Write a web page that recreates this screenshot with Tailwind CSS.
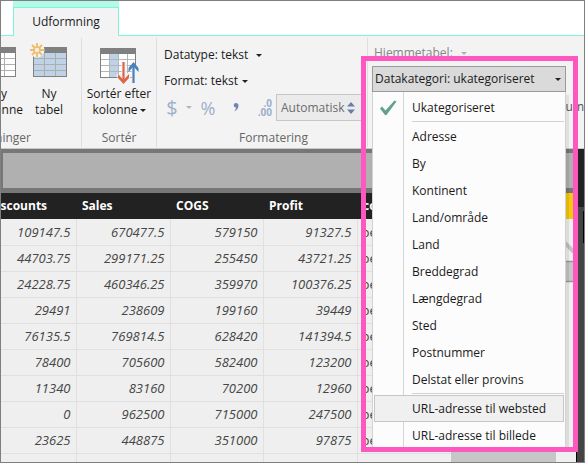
<!DOCTYPE html>
<html lang="da">
<head>
<meta charset="utf-8">
<title>Udformning</title>
<script src="https://cdn.jsdelivr.net/npm/@tailwindcss/browser@4"></script>
</head>
<body class="font-['Open_Sans','Noto_Sans',sans-serif] text-[12px] leading-[18px] text-[#1a1a1a]">
<div class="relative flex h-screen flex-col overflow-hidden border border-[#7f7f7f] bg-white">

  <!-- Tabs -->
  <nav class="flex h-[35px] shrink-0 items-end">
    <div class="w-3 shrink-0 border-b border-[#7df5d8]"></div>
    <div class="flex h-full w-[106px] shrink-0 flex-col">
      <div class="h-1.5 bg-[#b3fbe8]"></div>
      <button class="flex-1 border-x border-t border-[#7df5d8] bg-[#f3f3f3]">Udformning</button>
    </div>
    <div class="flex-1 border-b border-[#7df5d8]"></div>
  </nav>

  <!-- Ribbon -->
  <section class="flex h-[113px] shrink-0 border-b border-[#c8c8c8] bg-[#f3f3f3] pt-0.5 pb-px whitespace-nowrap">
    <div class="flex w-[81px] shrink-0 flex-col border-r border-[#dedede]">
      <div class="flex flex-1">
        <button class="flex w-[22px] flex-col items-end overflow-hidden pt-1">
          <svg class="h-11 w-[22px] shrink-0" viewBox="0 0 22 44" aria-hidden="true">
            <rect x="-18.500" y="5.500" width="33" height="29" fill="#fff" stroke="#808080"/>
            <rect x="-18" y="5" width="33" height="6" fill="#808080"/>
            <path d="M3.500 11V34M0 16.500H14M0 22.500H14M0 28.500H14" stroke="#b0b0b0" fill="none"/>
          </svg>
          <span class="flex flex-col items-end leading-4"><span class="pr-4">Ny</span><span>kolonne</span></span>
        </button>
        <button class="flex w-[52px] flex-col items-center pt-1">
          <svg class="h-11 w-[38px] shrink-0" viewBox="0 0 38 44" aria-hidden="true">
            <rect x="3.500" y="5.500" width="33" height="29" fill="#bfd3e8" stroke="#808080"/>
            <rect x="3" y="5" width="34" height="6" fill="#808080"/>
            <path d="M14.500 11V34M25.500 11V34M4 16.500H36M4 22.500H36M4 28.500H36" stroke="#adadad" fill="none"/>
            <circle cx="7" cy="8" r="7.500" fill="#f3f3f3"/>
            <path d="M7 1V5M7 11V15M0 8H4M10 8H14M2 3L5 6M9 10L12 13M12 3L9 6M5 10L2 13" stroke="#edbd6a" stroke-width="1.800"/>
            <circle cx="7" cy="8" r="3" fill="#f7f0e2" stroke="#edbd6a" stroke-width="1.500"/>
          </svg>
          <span class="leading-4">Ny<br>tabel</span>
        </button>
      </div>
      <div class="flex w-[30px] justify-end overflow-hidden text-[#666]">Beregninger</div>
    </div>

    <div class="flex w-[75px] shrink-0 flex-col items-center border-r border-[#dedede]">
      <button class="flex flex-1 flex-col items-center pt-1">
        <svg class="h-11 w-10 shrink-0" viewBox="0 0 40 44" aria-hidden="true">
          <rect x="1.500" y="6.500" width="35" height="29" fill="#fff" stroke="#808080"/>
          <rect x="11" y="11" width="8" height="24" fill="#bfd3e8"/>
          <rect x="1" y="6" width="36" height="6" fill="#808080"/>
          <path d="M10.500 12V35M19.500 12V35M28.500 12V35M2 17.500H36M2 23.500H36M2 29.500H36" stroke="#b5b5b5" fill="none"/>
          <path d="M25 20V36M19 32L25 40L31 32M35 40V25" stroke="#f3f3f3" stroke-width="5" fill="none"/>
          <path d="M24.500 20V38" stroke="#dc6646" stroke-width="2.200"/>
          <path d="M19 32L24.500 38L30 32V36L24.500 42L19 36Z" fill="#dc6646"/>
          <path d="M34.500 41V23" stroke="#4880bb" stroke-width="2.200"/>
          <path d="M29.500 26L34.500 20L39.500 26V30L34.500 24.500L29.500 30Z" fill="#4880bb"/>
        </svg>
        <span class="leading-4">Sortér efter</span>
        <span class="flex items-center gap-0.5 leading-4">kolonne <svg class="w-1.5" viewBox="0 0 6 3" aria-hidden="true"><path d="M0 0H6L3 3Z" fill="#222"/></svg></span>
      </button>
      <div class="text-[#666]">Sortér</div>
    </div>

    <div class="flex w-[211px] shrink-0 flex-col border-r border-[#dedede] pt-2 pl-[7px]">
      <button class="flex items-center gap-2 self-start">Datatype: tekst <svg class="w-1.5" viewBox="0 0 6 3" aria-hidden="true"><path d="M0 0H6L3 3Z" fill="#222"/></svg></button>
      <button class="mt-2 flex items-center gap-1 self-start">Format: tekst <svg class="w-1.5" viewBox="0 0 6 3" aria-hidden="true"><path d="M0 0H6L3 3Z" fill="#222"/></svg></button>
      <div class="mt-1 flex h-[27px] items-center text-[#9dafcc]">
        <button class="w-4 text-[20px]">$</button>
        <svg class="ml-1.5 w-1.5" viewBox="0 0 6 3" aria-hidden="true"><path d="M0 0H6L3 3Z" fill="#b5b5b5"/></svg>
        <button class="ml-2 w-4 text-[18px]">%</button>
        <button class="ml-3 flex w-4 justify-center" aria-label="Tusindtalsseparator"><svg class="h-3 w-2" viewBox="0 0 8 12" aria-hidden="true"><path d="M4 1a2.300 2.300 0 1 0 0 4.600C4 7.500 3 8.500 2 9.500C5 8.500 6.500 6 6.500 3.500A2.500 2.500 0 0 0 4 1Z" fill="#7086b3"/></svg></button>
        <label for="dec" class="ml-2.5 flex w-[18px] flex-col items-end text-[10px] leading-[9px] font-bold"><span>.0</span><span>.00</span></label>
        <div class="ml-1 flex h-[27px] w-[86px] shrink-0 items-center border border-[#c6c6c6] bg-[#ebebeb]">
          <input id="dec" value="Automatisk" class="w-[68px] bg-transparent pl-1 text-[#6b6b6b]">
          <svg class="ml-0.5 w-2" viewBox="0 0 8 12" aria-hidden="true"><path d="M0 4.500L4 0L8 4.500ZM0 7.500L4 12L8 7.500Z" fill="#6780a8"/></svg>
        </div>
      </div>
      <div class="mt-auto pl-4 text-center text-[#666]">Formatering</div>
    </div>

    <div class="flex flex-1 flex-col overflow-hidden pt-1.5 pl-1.5 text-[#868686]">
      <button class="flex items-center gap-2 self-start">Hjemmetabel: <svg class="w-1.5" viewBox="0 0 6 3" aria-hidden="true"><path d="M0 0H6L3 3Z" fill="#b0b0b0"/></svg></button>
      <div class="mt-9 self-end text-[#555]">Sum</div>
    </div>
  </section>

  <!-- Report canvas -->
  <main class="flex min-h-0 flex-1">
    <div class="flex min-w-0 flex-1 flex-col bg-[#efefef]">
      <div class="h-11 shrink-0 border-t-4 border-b-[5px] border-l-2 border-[#777] bg-[#b0b0b0]"></div>
      <div class="flex">
        <div class="flex w-[450px] shrink-0 justify-start overflow-hidden">
          <table class="-ml-[19px] w-[469px] shrink-0 table-fixed border-collapse text-[13px]">
            <thead class="bg-[#222] text-left text-[12px] text-white">
              <tr class="h-[26px]"><th class="w-[94px] p-0 pl-1.5">Discounts</th><th class="w-[94px] p-0 pl-1.5">Sales</th><th class="w-[93px] p-0 pl-1.5">COGS</th><th class="w-[94px] p-0 pl-1.5">Profit</th><th class="p-0 pl-1.5">country</th></tr>
            </thead>
            <tbody id="rows" class="text-[#454545]"></tbody>
          </table>
        </div>
        <div class="h-[26px] flex-1 bg-[#f4c80f]"></div>
      </div>
    </div>
    <aside class="flex w-2 shrink-0 flex-col border-l border-black bg-[#444]">
      <div class="h-[58px] bg-[#222]"></div>
      <div class="mt-1 h-8 w-px self-end bg-black"></div>
    </aside>
  </main>

  <!-- Pieces of the visual behind the open menu -->
  <svg class="absolute top-[238px] left-[563px] h-11 w-2.5" viewBox="0 0 10 44" aria-hidden="true">
    <path d="M0 3L10 13" stroke="#c2c2c2" stroke-width="4"/>
    <path d="M0 22H10V43H0Z" fill="#c6c6c6"/><path d="M0 22.500H10M0 42.500H10" stroke="#999" stroke-width="1.500"/>
  </svg>
  <div class="absolute bottom-0 left-[450px] h-4 w-[105px] bg-[#c6c6c6]"></div>

  <!-- Data category drop-down -->
  <div class="absolute top-[55px] left-[360px] flex h-[396px] w-[217px] flex-col overflow-hidden border-[5px] border-[#ff57c0] px-1.5 pt-[5px]">
    <button class="flex h-[26px] w-[194px] shrink-0 items-center justify-between border border-[#9a9a9a] bg-[#dadada] pr-1 pl-0.5" aria-expanded="true">Datakategori: ukategoriseret <svg class="w-1.5" viewBox="0 0 6 3" aria-hidden="true"><path d="M0 0H6L3 3Z" fill="#222"/></svg></button>
    <div role="menu" class="flex w-[194px] shrink-0 flex-col border-x border-[#d2d2d2] bg-[linear-gradient(to_right,#fcfcfc_30px,#d5d5d5_30px,#d5d5d5_31px,#fcfcfc_31px)] px-px pt-0.5 shadow-[3px_3px_0_#00000014]">
      <button role="menuitemradio" aria-checked="true" class="flex h-[27px] items-center">
        <svg class="mx-[5px] h-4 w-[18px]" viewBox="0 0 18 16" aria-hidden="true"><path d="M1 8.500L3 6.500L6.500 10.500L15.500 0.500L17.500 1.500L7.500 15H6Z" fill="#5fa28d"/></svg>
        <span class="pl-2.5">Ukategoriseret</span>
      </button>
      <div class="mb-px ml-[38px] h-px bg-[#d2d2d2]"></div>
      <button role="menuitem" class="h-[27px] pl-[38px] text-left">Adresse</button>
      <button role="menuitem" class="h-[27px] pl-[38px] text-left">By</button>
      <button role="menuitem" class="h-[27px] pl-[38px] text-left">Kontinent</button>
      <button role="menuitem" class="h-[27px] pl-[38px] text-left">Land/område</button>
      <button role="menuitem" class="h-[27px] pl-[38px] text-left">Land</button>
      <button role="menuitem" class="h-[27px] pl-[38px] text-left">Breddegrad</button>
      <button role="menuitem" class="h-[27px] pl-[38px] text-left">Længdegrad</button>
      <button role="menuitem" class="h-[27px] pl-[38px] text-left">Sted</button>
      <button role="menuitem" class="h-[27px] pl-[38px] text-left">Postnummer</button>
      <button role="menuitem" class="h-[27px] pl-[38px] text-left">Delstat eller provins</button>
      <div class="mb-px ml-[38px] h-px bg-[#d2d2d2]"></div>
      <button role="menuitem" class="h-[27px] border border-[#c6c6c6] bg-[#f0f0f0] pl-[37px] text-left">URL-adresse til websted</button>
      <button role="menuitem" class="h-[27px] pl-[38px] text-left">URL-adresse til billede</button>
    </div>
  </div>
</div>
<script>
const data = [
  ['109147.5','670477.5','579150','91327.5'],
  ['44703.75','299171.25','255450','43721.25'],
  ['24228.75','460346.25','359970','100376.25'],
  ['29491','238609','199160','39449'],
  ['76135.5','769814.5','628420','141394.5'],
  ['78400','705600','582400','123200'],
  ['11340','83160','70200','12960'],
  ['0','962500','715000','247500'],
  ['23625','448875','351000','97875'],
  ['','','','']
];
document.getElementById('rows').innerHTML = data.map(r =>
  '<tr class="h-[26px] border-b border-[#e0e0e0]">' +
  r.map(v => '<td class="border-r border-[#e0e0e0] p-0 pr-[5px] text-right italic">' + v + '</td>').join('') +
  '<td class="p-0 pl-1">' + (r[0] ? 'beløb' : '') + '</td></tr>').join('');
</script>
</body>
</html>
